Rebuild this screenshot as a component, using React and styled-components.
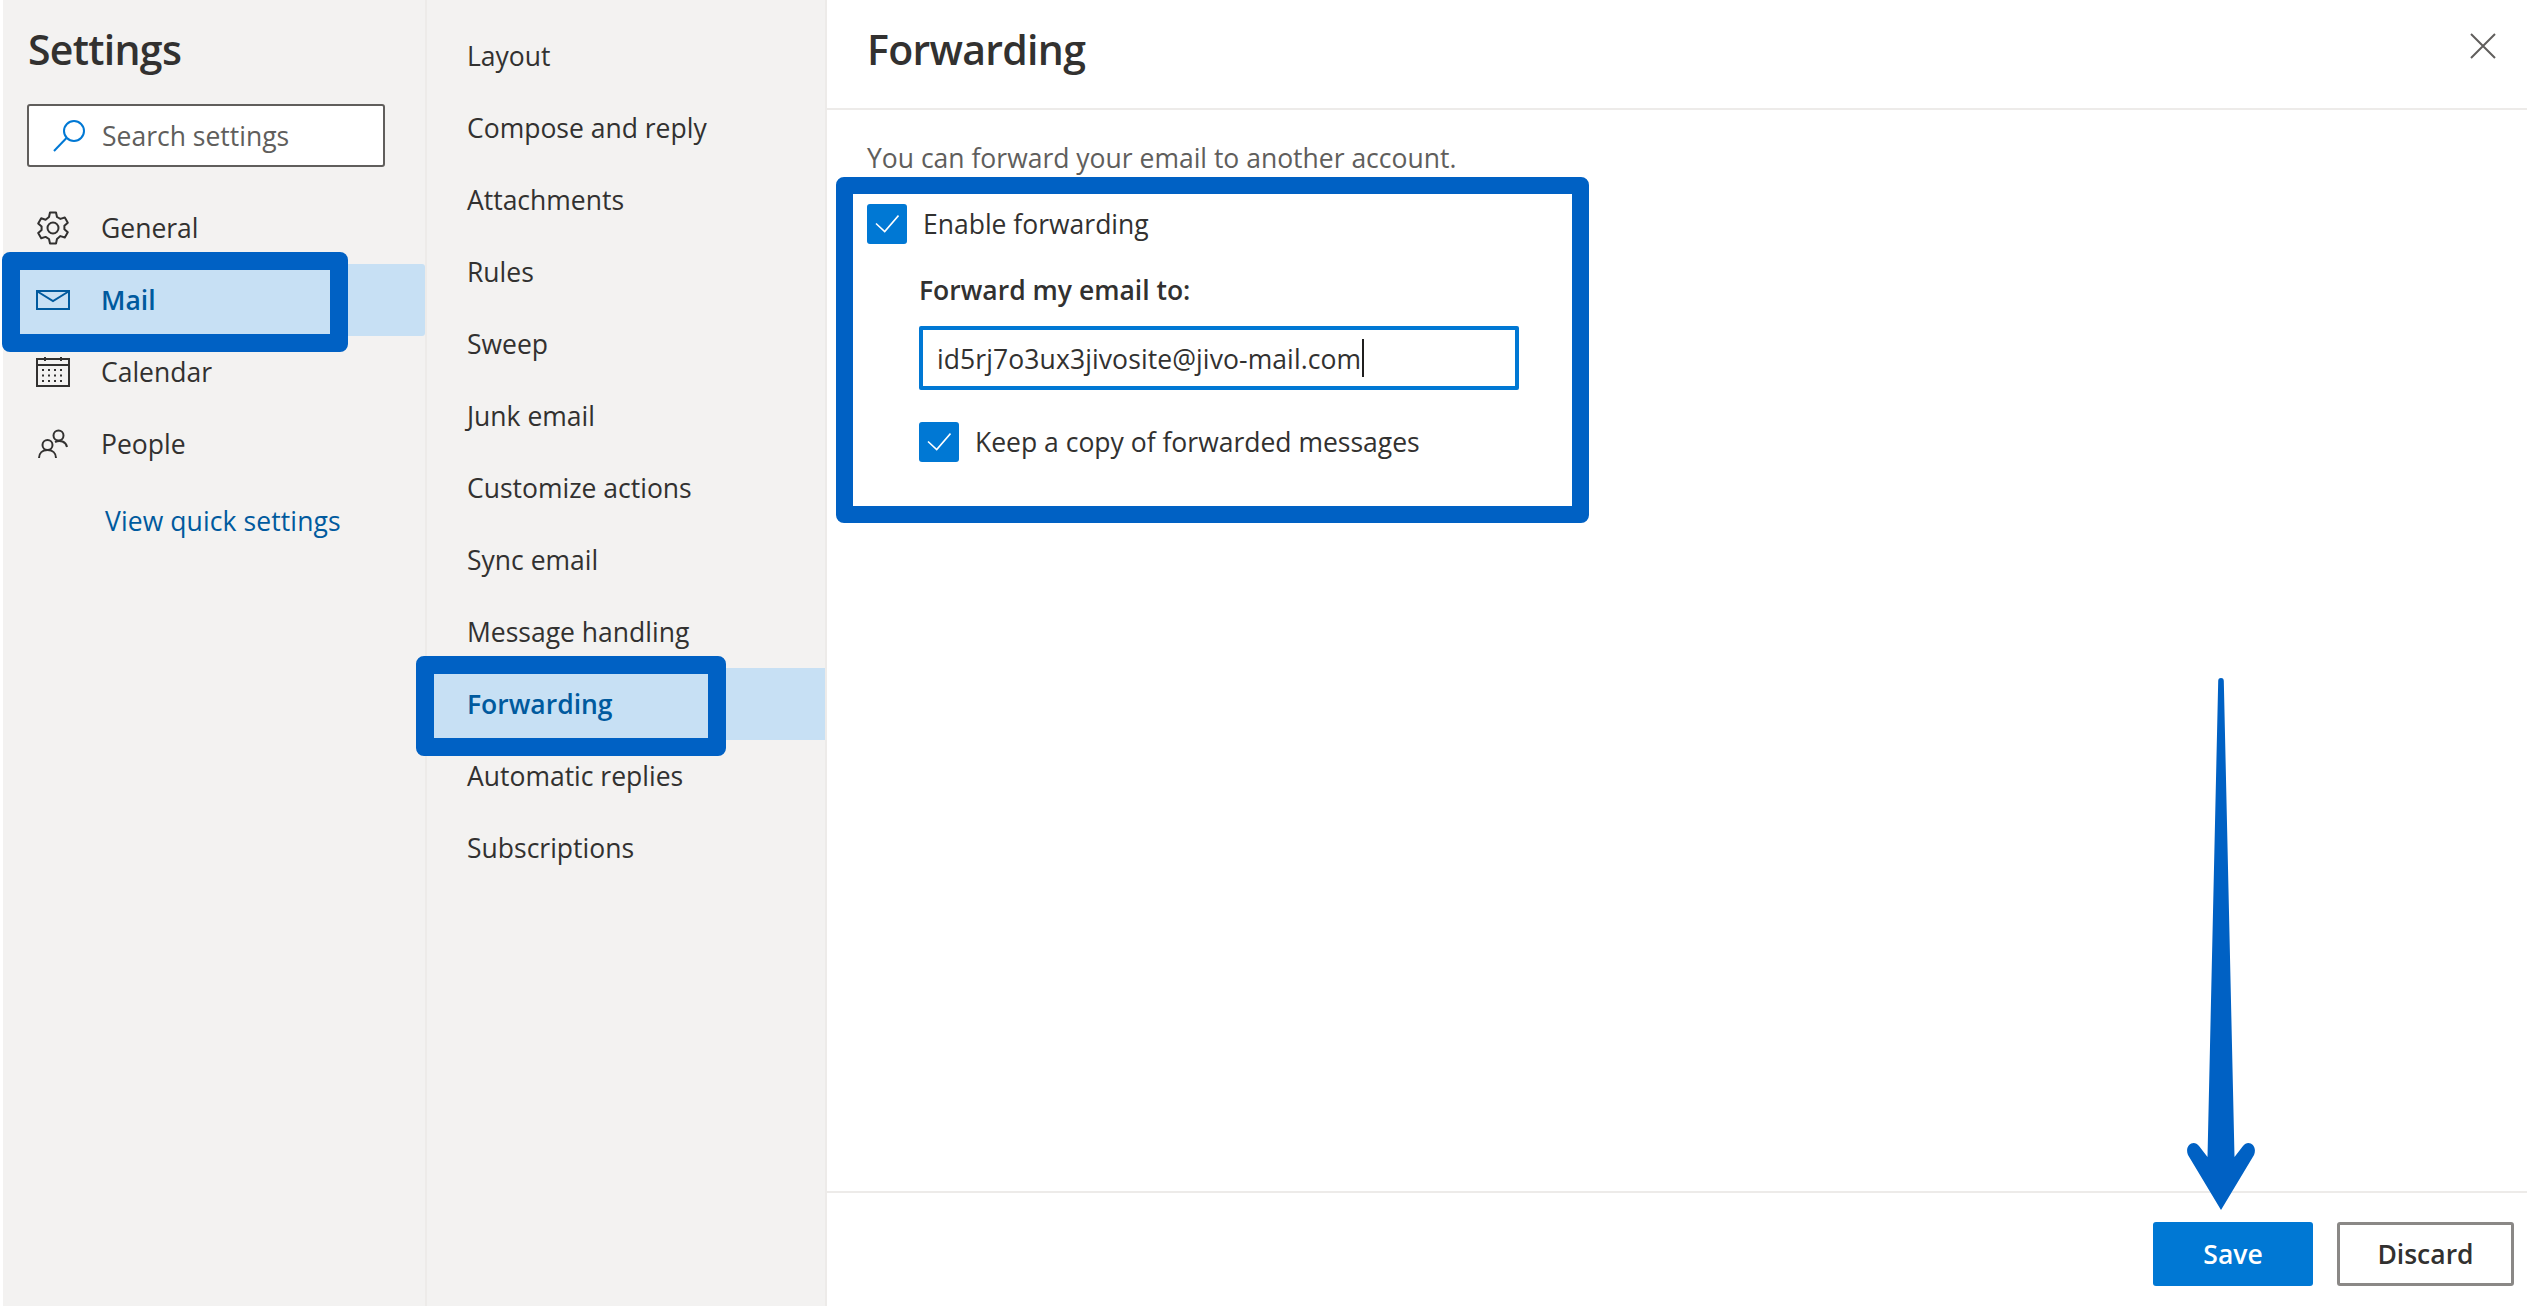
import React from 'react';
import styled, { createGlobalStyle } from 'styled-components';

const Global = createGlobalStyle`
  html, body { margin: 0; padding: 0; background: #fff; }
  body { font-family: "Open Sans", "Noto Sans", sans-serif; color: #323130; }
`;

const Page = styled.div`
  position: relative;
  width: 2527px;
  height: 1306px;
  overflow: hidden;
  padding-left: 3px;
  box-sizing: border-box;
  display: grid;
  grid-template-columns: 424px 400px 1fr;
`;
const SettingsPane = styled.nav`
  background: #f3f2f1;
  border-right: 2px solid #edebe9;
  box-sizing: border-box;
  display: flex;
  flex-direction: column;
`;
const SettingsTitle = styled.h1`
  margin: 0;
  height: 100px;
  padding: 21px 0 0 25px;
  box-sizing: border-box;
  font-size: 41px;
  line-height: 56px;
  font-weight: 600;
  letter-spacing: -0.7px;
`;
const Search = styled.div`
  width: 358px;
  height: 63px;
  margin: 4px 0 0 24px;
  box-sizing: border-box;
  background: #fff;
  border: 2px solid #605e5c;
  border-radius: 3px;
  display: flex;
  align-items: center;
  gap: 15px;
  padding-left: 24px;
  color: #605e5c;
  font-size: 26.5px;
`;
const MainNav = styled.div`
  margin-top: 25px;
  display: flex;
  flex-direction: column;
`;
const MainRow = styled.div`
  height: 72px;
  border-radius: 3px;
  display: flex;
  align-items: center;
  gap: 31px;
  padding-left: 33px;
  font-size: 26.5px;
  font-weight: ${p => (p.$active ? 600 : 400)};
  color: ${p => (p.$active ? '#005a9e' : '#323130')};
  background: ${p => (p.$active ? '#c7e0f4' : 'transparent')};
`;
const IconSlot = styled.span`
  width: 34px;
  height: 34px;
  display: flex;
  align-items: center;
  justify-content: center;
  flex: none;
`;
const QuickLink = styled.a`
  margin: 15px 0 0 102px;
  font-size: 26.5px;
  letter-spacing: 0.1px;
  line-height: 52px;
  color: #005a9e;
`;
const SubPane = styled.nav`
  background: #f3f2f1;
  border-right: 2px solid #edebe9;
  padding-top: 20px;
  display: flex;
  flex-direction: column;
`;
const SubRow = styled.div`
  height: 72px;
  display: flex;
  align-items: center;
  padding-left: 40px;
  font-size: 26.5px;
  font-weight: ${p => (p.$active ? 600 : 400)};
  color: ${p => (p.$active ? '#005a9e' : '#323130')};
  background: ${p => (p.$active ? '#c7e0f4' : 'transparent')};
`;
const Detail = styled.main`
  display: flex;
  flex-direction: column;
  min-width: 0;
`;
const DetailHeader = styled.header`
  height: 110px;
  box-sizing: border-box;
  border-bottom: 2px solid #edebe9;
  display: flex;
  align-items: flex-start;
  justify-content: space-between;
  padding: 21px 31px 0 40px;
`;
const DetailTitle = styled.h2`
  margin: 0;
  font-size: 41px;
  line-height: 56px;
  font-weight: 600;
  letter-spacing: -0.7px;
`;
const CloseButton = styled.span`
  display: block;
  margin-top: 12px;
  line-height: 0;
`;
const DetailBody = styled.div`
  flex: 1;
  padding: 28px 0 0 40px;
`;
const Intro = styled.p`
  margin: 0;
  font-size: 26.5px;
  line-height: 40px;
  color: #605e5c;
`;
const CheckRow = styled.label`
  display: flex;
  align-items: center;
  gap: 16px;
  height: 40px;
  font-size: 26.5px;
  margin: ${p => p.$margin || 0};
`;
const CheckBox = styled.span`
  width: 40px;
  height: 40px;
  flex: none;
  border-radius: 3px;
  background: #0078d4;
  display: flex;
  align-items: center;
  justify-content: center;
`;
const Nested = styled.div`
  margin: 0 0 0 52px;
`;
const FieldLabel = styled.div`
  margin-top: 28px;
  font-size: 26.5px;
  line-height: 36px;
  font-weight: 600;
`;
const EmailField = styled.div`
  margin-top: 18px;
  width: 600px;
  height: 64px;
  box-sizing: border-box;
  border: 4px solid #0078d4;
  border-radius: 2px;
  display: flex;
  align-items: center;
  padding: 2px 0 0 14px;
  font-size: 26.5px;
  letter-spacing: 0.1px;
  white-space: nowrap;
`;
const Caret = styled.span`
  display: inline-block;
  width: 2px;
  height: 38px;
  background: #201f1e;
  margin: -2px 0 0 1px;
`;
const Footer = styled.footer`
  height: 115px;
  box-sizing: border-box;
  border-top: 2px solid #edebe9;
  display: flex;
  justify-content: flex-end;
  gap: 24px;
  padding: 29px 13px 0 0;
`;
const Button = styled.button`
  height: 64px;
  width: ${p => p.$w}px;
  box-sizing: border-box;
  border-radius: 3px;
  font-family: inherit;
  font-size: 26.5px;
  font-weight: 600;
  padding: 0;
  border: ${p => (p.$primary ? 'none' : '3px solid #8a8886')};
  background: ${p => (p.$primary ? '#0078d4' : '#fff')};
  color: ${p => (p.$primary ? '#fff' : '#323130')};
`;
const Callout = styled.div`
  position: absolute;
  left: ${p => p.$x}px;
  top: ${p => p.$y}px;
  width: ${p => p.$w}px;
  height: ${p => p.$h}px;
  box-sizing: border-box;
  border: ${p => p.$b}px solid #0061c4;
  border-radius: 8px;
  pointer-events: none;
`;
const ArrowMark = styled.svg`
  position: absolute;
  left: 2180px;
  top: 675px;
`;

const Check = () => (
  <svg width="24" height="24" viewBox="0 0 24 24" fill="none" stroke="#fff" strokeWidth="1.6">
    <path d="M1 11.500 L9.700 19.500 L23.500 3.500" />
  </svg>
);
const icon = { fill: 'none', stroke: '#323130', strokeWidth: 2 };
const Gear = () => (
  <svg width="34" height="34" viewBox="0 0 34 34" {...icon}>
    <circle cx="17" cy="17" r="5.500" />
    <path d="M14 1.500h6l1 4.500 3.400 1.900 4.400-1.400 3 5.200-3.400 3.100v3.400l3.400 3.100-3 5.200-4.400-1.400L21 28l-1 4.500h-6L13 28l-3.400-2.100-4.400 1.400-3-5.200 3.400-3.100v-3.400l-3.400-3.100 3-5.200 4.400 1.400L13 6z" strokeLinejoin="round" />
  </svg>
);
const Envelope = () => (
  <svg width="34" height="20" viewBox="0 0 34 20" fill="none" stroke="#005a9e" strokeWidth="2">
    <rect x="1" y="1" width="32" height="18" />
    <path d="M1.500 1.500 L17 11 L32.500 1.500" />
  </svg>
);
const Cal = () => (
  <svg width="34" height="30" viewBox="0 0 34 30" fill="none" stroke="#323130" strokeWidth="2">
    <rect x="1" y="2" width="32" height="27" />
    <path d="M1 8h32M9 0v4M25 0v4" />
    <path d="M6 13h22M6 18.500h22M6 24h22" strokeDasharray="2 4" />
  </svg>
);
const People = () => (
  <svg width="30" height="30" viewBox="0 0 30 30" fill="none" stroke="#323130" strokeWidth="2">
    <circle cx="20.500" cy="6.500" r="5" />
    <circle cx="9.500" cy="16" r="5" />
    <path d="M1 29c0-5 3.500-8 8.500-8s8.500 3 8.500 8" />
    <path d="M17 13c5-2.500 11-.5 12 5" />
  </svg>
);

const mainItems = [
  ['General', <Gear />],
  ['Mail', <Envelope />],
  ['Calendar', <Cal />],
  ['People', <People />],
];
const subItems = ['Layout', 'Compose and reply', 'Attachments', 'Rules', 'Sweep', 'Junk email', 'Customize actions', 'Sync email', 'Message handling', 'Forwarding', 'Automatic replies', 'Subscriptions'];

export default function App() {
  return (
    <>
      <Global />
      <Page>
        <SettingsPane>
          <SettingsTitle>Settings</SettingsTitle>
          <Search>
            <svg width="34" height="32" viewBox="0 0 34 32" fill="none" stroke="#0078d4" strokeWidth="2">
              <circle cx="21" cy="11" r="10" />
              <path d="M13.500 18 L1 31" />
            </svg>
            Search settings
          </Search>
          <MainNav>
            {mainItems.map(([label, glyph]) => (
              <MainRow key={label} $active={label === 'Mail'}>
                <IconSlot>{glyph}</IconSlot>
                {label}
              </MainRow>
            ))}
          </MainNav>
          <QuickLink>View quick settings</QuickLink>
        </SettingsPane>
        <SubPane>
          {subItems.map(label => (
            <SubRow key={label} $active={label === 'Forwarding'}>{label}</SubRow>
          ))}
        </SubPane>
        <Detail>
          <DetailHeader>
            <DetailTitle>Forwarding</DetailTitle>
            <CloseButton>
              <svg width="26" height="26" viewBox="0 0 26 26" stroke="#605e5c" strokeWidth="2">
                <path d="M1 1 L25 25 M25 1 L1 25" />
              </svg>
            </CloseButton>
          </DetailHeader>
          <DetailBody>
            <Intro>You can forward your email to another account.</Intro>
            <CheckRow $margin="26px 0 0 0">
              <CheckBox><Check /></CheckBox>
              Enable forwarding
            </CheckRow>
            <Nested>
              <FieldLabel>Forward my email to:</FieldLabel>
              <EmailField>id5rj7o3ux3jivosite@jivo-mail.com<Caret /></EmailField>
              <CheckRow $margin="32px 0 0 0">
                <CheckBox><Check /></CheckBox>
                Keep a copy of forwarded messages
              </CheckRow>
            </Nested>
          </DetailBody>
          <Footer>
            <Button $primary $w={160}>Save</Button>
            <Button $w={177}>Discard</Button>
          </Footer>
        </Detail>
        <Callout $x={2} $y={252} $w={346} $h={100} $b={18} />
        <Callout $x={416} $y={656} $w={310} $h={100} $b={18} />
        <Callout $x={836} $y={177} $w={753} $h={346} $b={17} />
        <ArrowMark width="82" height="540" viewBox="0 0 82 540">
          <path fill="#0061c4" d="M41 3 C43 3 43.700 4 43.800 6 L54.500 482 L63 471 C68 464 78 470 74 480 L41 535 L8 480 C4 470 14 464 19 471 L27.500 482 L38.200 6 C38.300 4 39 3 41 3 Z" />
        </ArrowMark>
      </Page>
    </>
  );
}
